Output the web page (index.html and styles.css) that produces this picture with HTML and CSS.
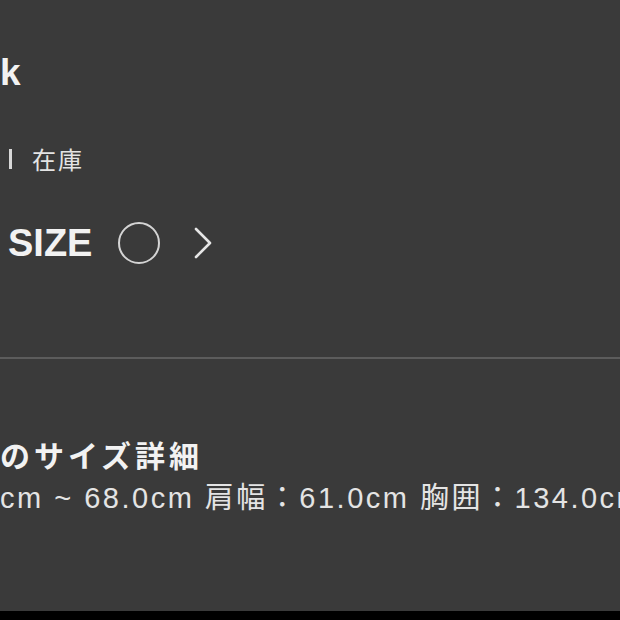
FILE: index.html
```html
<!DOCTYPE html>
<html lang="ja">
<head>
    <meta charset="UTF-8">
    <meta name="viewport" content="width=device-width, initial-scale=1.0">
    <title>商品詳細</title>
    <link rel="stylesheet" href="styles.css">
</head>
<body>
    <main class="screen">
        <section class="item-head">
            <h1 class="item-name">k</h1>
            <p class="item-stock"><span class="sep"></span>在庫</p>
            <div class="size-row">
                <span class="size-label">SIZE</span>
                <span class="size-mark"></span>
                <svg class="chevron" width="20" height="34" viewBox="0 0 20 34">
                    <path d="M3 3 L17 17 L3 31" fill="none" stroke="#e6e6e6" stroke-width="2.6" stroke-linecap="round" stroke-linejoin="round"/>
                </svg>
            </div>
        </section>

        <hr class="divider">

        <section class="size-detail">
            <h2 class="detail-title">のサイズ詳細</h2>
            <p class="detail-text">cm ~ 68.0cm 肩幅：61.0cm 胸囲：134.0cm</p>
        </section>
    </main>
    <div class="bottom-bar"></div>
</body>
</html>
```

FILE: styles.css
```css
* {
    margin: 0;
    padding: 0;
    box-sizing: border-box;
}

:root {
    --bg: #3a3a3a;
    --text: #f2f2f2;
    --text-soft: #e4e4e4;
    --line: #5c5c5c;
}

body {
    font-family: "Noto Sans CJK JP", "Noto Sans", sans-serif;
    background: var(--bg);
    color: var(--text);
    width: 620px;
    height: 620px;
    overflow: hidden;
    display: flex;
    flex-direction: column;
}

.screen {
    flex: 1;
    overflow: hidden;
}

.item-head {
    padding-top: 51px;
}

.item-name {
    font-family: "Liberation Sans", "Noto Sans CJK JP", sans-serif;
    font-size: 37px;
    font-weight: 700;
    line-height: 44px;
}

.item-stock {
    margin-top: 49px;
    font-size: 24px;
    line-height: 30px;
    letter-spacing: 2px;
    color: var(--text-soft);
    display: flex;
    align-items: center;
}

.sep {
    display: block;
    width: 3px;
    height: 20px;
    margin-left: 9px;
    margin-right: 20px;
    background: #d8d8d8;
}

.size-row {
    margin-top: 47px;
    display: flex;
    align-items: center;
    height: 44px;
}

.size-label {
    margin-left: 8px;
    font-family: "Liberation Sans", "Noto Sans CJK JP", sans-serif;
    font-size: 38px;
    font-weight: 700;
}

.size-mark {
    margin-left: 26px;
    width: 42px;
    height: 42px;
    border: 2px solid #d4d4d4;
    border-radius: 50%;
}

.chevron {
    margin-left: 33px;
}

.divider {
    margin-top: 92px;
    border: none;
    height: 2px;
    background: var(--line);
}

.size-detail {
    padding-top: 75px;
}

.detail-title {
    font-size: 30px;
    font-weight: 700;
    line-height: 40px;
    letter-spacing: 4px;
}

.detail-text {
    margin-top: 4px;
    font-family: "Liberation Sans", "Noto Sans CJK JP", sans-serif;
    font-size: 29px;
    line-height: 40px;
    letter-spacing: 2.5px;
    white-space: nowrap;
    color: var(--text-soft);
}

.bottom-bar {
    height: 9px;
    background: #000;
}
```
